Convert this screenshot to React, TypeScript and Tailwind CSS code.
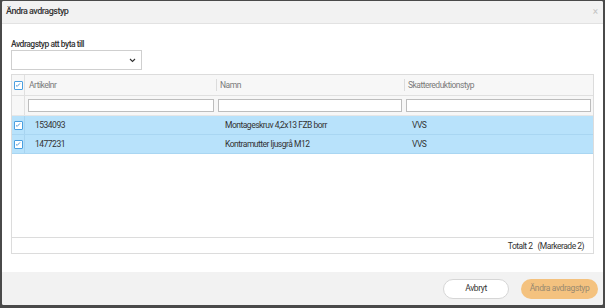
import React from "react";

const rows = [
  { nr: "1534093", namn: "Montageskruv 4,2x13 FZB borr", typ: "VVS" },
  { nr: "1477231", namn: "Kontramutter ljusgrå M12", typ: "VVS" },
];

const CheckBox = () => (
  <span className="flex h-[9px] w-[9px] items-center justify-center rounded-[1px] border border-[#4a9fe0] bg-white">
    <svg width="6" height="6" viewBox="0 0 6 6" fill="none">
      <path d="M1 3.4 L2.2 4.4 L5 1.4" stroke="#3a8fd6" strokeWidth="0.9" />
    </svg>
  </span>
);

export default function App() {
  return (
    <div
      className="h-[308px] w-[605px] overflow-hidden bg-[#4a4a4a] px-[2px] pt-[1px]"
      style={{ fontFamily: "Roboto, 'Liberation Sans', sans-serif" }}
    >
      <div className="flex h-[304px] flex-col overflow-hidden rounded-[2px] bg-white">
        {/* Header */}
        <div className="flex h-[23px] shrink-0 items-center justify-between border-b border-[#e2e2e2] bg-[#f2f2f2] pl-[4px] pr-[5px]">
          <span className="text-[9px] font-medium tracking-[-0.5px] text-[#333]">
            Ändra avdragstyp
          </span>
          <span className="text-[10px] leading-none text-[#c4c4c4]">×</span>
        </div>

        {/* Body */}
        <div className="flex-1 px-[9px] pt-[14px] leading-[12px]">
          <div className="text-[8.5px] font-medium tracking-[-0.5px] text-[#333]">
            Avdragstyp att byta till
          </div>
          <div className="flex h-[20px] w-[131px] items-center justify-end border border-[#cfcfcf] pr-[5px]">
            <svg width="7" height="5" viewBox="0 0 7 5" fill="none">
              <path d="M1 1 L3.5 3.5 L6 1" stroke="#333" strokeWidth="1.1" />
            </svg>
          </div>

          {/* Grid */}
          <div className="mt-[4px] flex h-[180px] flex-col border border-[#dcdcdc] text-[8.5px] tracking-[-0.5px]">
            <div className="flex h-[21px] shrink-0 border-b border-[#e0e0e0] bg-[#f7f7f7] text-[#7a7a7a]">
              <div className="flex w-[13px] items-center justify-center border-r border-[#e0e0e0]">
                <CheckBox />
              </div>
              <div className="flex w-[191px] items-center pl-[4px]">Artikelnr</div>
              <div className="my-[4px] flex w-[188px] items-center border-l border-[#dcdcdc] pl-[3px]">
                Namn
              </div>
              <div className="my-[4px] flex flex-1 items-center border-l border-[#dcdcdc] pl-[3px]">
                Skattereduktionstyp
              </div>
            </div>
            <div className="flex h-[20px] shrink-0 items-center border-b border-[#e6e6e6] bg-[#f7f7f7]">
              <div className="h-full w-[13px] border-r border-[#e0e0e0]" />
              <div className="w-[191px] pl-[3px] pr-[2px]">
                <div className="h-[13px] border border-[#bdbdbd] bg-white" />
              </div>
              <div className="w-[188px] px-[2px]">
                <div className="h-[13px] border border-[#bdbdbd] bg-white" />
              </div>
              <div className="flex-1 px-[2px]">
                <div className="h-[13px] border border-[#bdbdbd] bg-white" />
              </div>
            </div>
            {rows.map((r) => (
              <div
                key={r.nr}
                className="flex h-[19px] shrink-0 items-center border-b border-[#a9d6f2] bg-[#b8e2fb] text-[#333] last:border-b-0"
              >
                <div className="flex h-full w-[13px] items-center justify-center border-r border-[#a8d4f0]">
                  <CheckBox />
                </div>
                <div className="w-[191px] pl-[10px]">{r.nr}</div>
                <div className="w-[188px] pl-[9px]">{r.namn}</div>
                <div className="flex-1 pl-[8px]">{r.typ}</div>
              </div>
            ))}
            <div className="flex-1" />
            <div className="flex h-[16px] shrink-0 items-center justify-end gap-[5px] border-t border-[#dcdcdc] pr-[9px] text-[#333]">
              <span>Totalt 2</span>
              <span>(Markerade 2)</span>
            </div>
          </div>
        </div>

        {/* Footer */}
        <div className="flex h-[33px] shrink-0 items-center justify-end gap-[12px] bg-[#f2f2f2] pr-[5px] text-[8.5px] tracking-[-0.4px]">
          <button className="h-[20px] w-[66px] rounded-full border border-[#d6d6d6] bg-white text-[#333]">
            Avbryt
          </button>
          <button className="h-[20px] w-[77px] rounded-full bg-[#f4c27f] text-[#9a8a70]">
            Ändra avdragstyp
          </button>
        </div>
      </div>
    </div>
  );
}
